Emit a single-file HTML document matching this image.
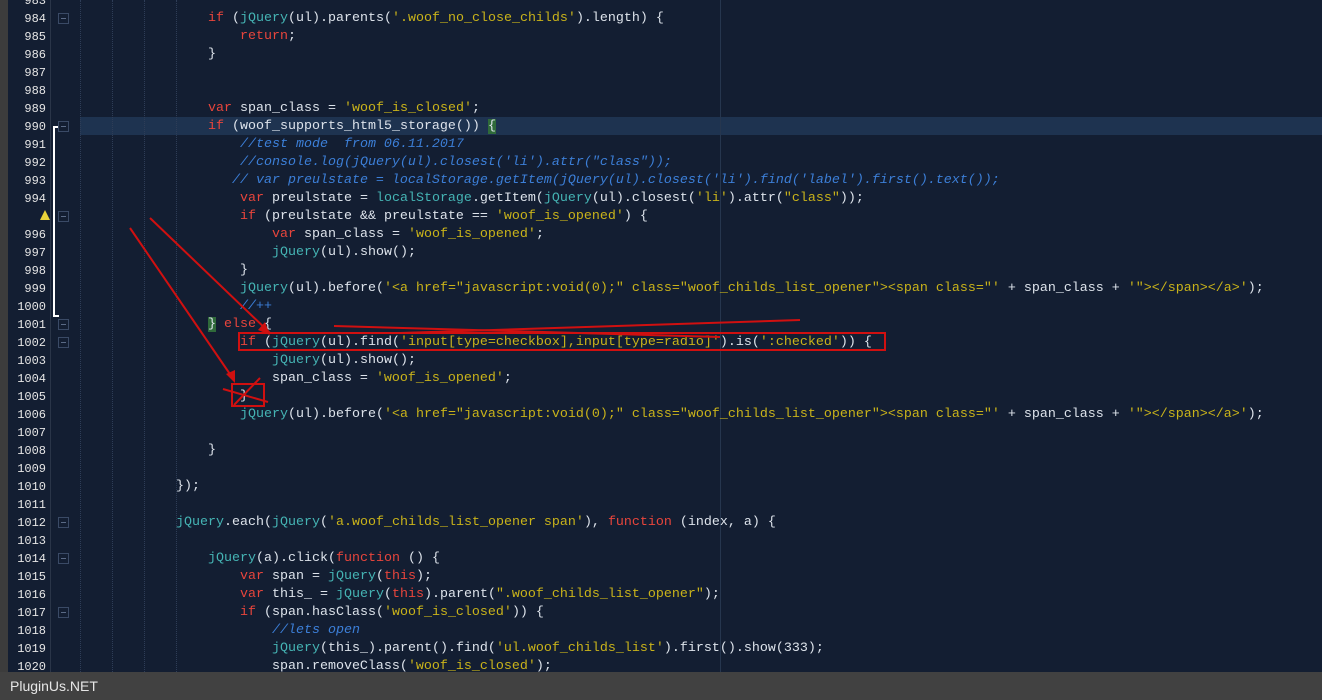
<!DOCTYPE html>
<html><head><meta charset="utf-8"><style>
body{margin:0;width:1322px;height:700px;overflow:hidden;background:#131e32;font-family:"Liberation Mono",monospace;position:relative}
.g{position:absolute;left:0;top:0;width:8px;height:672px;background:#3c3c3c}
.sep{position:absolute;left:50px;top:0;width:1px;height:672px;background:#2a3548}
.ln{position:absolute;left:8px;width:38px;text-align:right;color:#e6e6e6;font-size:12px;line-height:18px;height:18px;padding-top:1px}
.c{position:absolute;left:80px;white-space:pre;color:#dde3eb;font-size:13.33px;line-height:18px;height:18px;padding-top:1px}
.k{color:#e8453c}.s{color:#c9b31a}.j{color:#45b4b4}.m{color:#3c7fd8;font-style:italic}
.gd{position:absolute;top:0;height:672px;border-left:1px dotted #2e3d57}
.fb{position:absolute;left:58px;width:9px;height:9px;border:1px solid #3a4a66}
.fb:after{content:"";position:absolute;left:2px;top:4px;width:5px;height:1px;background:#5a6a86}
.bar{position:absolute;left:0;top:672px;width:1322px;height:28px;background:#414141;color:#e6e6e6;font-family:"Liberation Sans",sans-serif;font-size:14px;line-height:28px;padding-left:10px;box-sizing:border-box}
</style></head><body>
<div class="g"></div><div class="sep"></div>
<div style="position:absolute;left:80px;top:117px;width:1242px;height:18px;background:#1e3350"></div>
<div class="gd" style="left:80px"></div><div class="gd" style="left:112px"></div><div class="gd" style="left:144px"></div><div class="gd" style="left:176px"></div>
<div style="position:absolute;left:720px;top:0;width:1px;height:672px;background:#26364e"></div>
<div style="position:absolute;left:53px;top:126px;width:2px;height:190px;background:#fff"></div>
<div style="position:absolute;left:53px;top:126px;width:6px;height:2px;background:#fff"></div>
<div style="position:absolute;left:53px;top:315px;width:6px;height:2px;background:#fff"></div>
<div class="fb" style="top:13px"></div><div class="fb" style="top:121px"></div><div class="fb" style="top:211px"></div><div class="fb" style="top:319px"></div><div class="fb" style="top:337px"></div><div class="fb" style="top:517px"></div><div class="fb" style="top:553px"></div><div class="fb" style="top:607px"></div>
<div style="position:absolute;left:40px;top:210px;width:0;height:0;border-left:5px solid transparent;border-right:5px solid transparent;border-bottom:10px solid #e8d23a"></div>

<div id="L"></div>
<script>
var lines=[
[983,''],
[984,'                <span class="k">if</span> (<span class="j">jQuery</span>(ul).parents(<span class="s">\'.woof_no_close_childs\'</span>).length) {'],
[985,'                    <span class="k">return</span>;'],
[986,'                }'],
[987,''],[988,''],
[989,'                <span class="k">var</span> span_class = <span class="s">\'woof_is_closed\'</span>;'],
[990,'                <span class="k">if</span> (woof_supports_html5_storage()) <span style="background:#2f6a3a">{</span>'],
[991,'                    <span class="m">//test mode  from 06.11.2017</span>'],
[992,'                    <span class="m">//console.log(jQuery(ul).closest(\'li\').attr("class"));</span>'],
[993,'                   <span class="m">// var preulstate = localStorage.getItem(jQuery(ul).closest(\'li\').find(\'label\').first().text());</span>'],
[994,'                    <span class="k">var</span> preulstate = <span class="j">localStorage</span>.getItem(<span class="j">jQuery</span>(ul).closest(<span class="s">\'li\'</span>).attr(<span class="s">"class"</span>));'],
[995,'                    <span class="k">if</span> (preulstate &amp;&amp; preulstate == <span class="s">\'woof_is_opened\'</span>) {'],
[996,'                        <span class="k">var</span> span_class = <span class="s">\'woof_is_opened\'</span>;'],
[997,'                        <span class="j">jQuery</span>(ul).show();'],
[998,'                    }'],
[999,'                    <span class="j">jQuery</span>(ul).before(<span class="s">\'&lt;a href="javascript:void(0);" class="woof_childs_list_opener"&gt;&lt;span class="\'</span> + span_class + <span class="s">\'"&gt;&lt;/span&gt;&lt;/a&gt;\'</span>);'],
[1000,'                    <span class="m">//++</span>'],
[1001,'                <span style="background:#2f6a3a">}</span> <span class="k">else</span> {'],
[1002,'                    <span class="k">if</span> (<span class="j">jQuery</span>(ul).find(<span class="s">\'input[type=checkbox],input[type=radio]\'</span>).is(<span class="s">\':checked\'</span>)) {'],
[1003,'                        <span class="j">jQuery</span>(ul).show();'],
[1004,'                        span_class = <span class="s">\'woof_is_opened\'</span>;'],
[1005,'                    }'],
[1006,'                    <span class="j">jQuery</span>(ul).before(<span class="s">\'&lt;a href="javascript:void(0);" class="woof_childs_list_opener"&gt;&lt;span class="\'</span> + span_class + <span class="s">\'"&gt;&lt;/span&gt;&lt;/a&gt;\'</span>);'],
[1007,''],
[1008,'                }'],
[1009,''],
[1010,'            });'],
[1011,''],
[1012,'            <span class="j">jQuery</span>.each(<span class="j">jQuery</span>(<span class="s">\'a.woof_childs_list_opener span\'</span>), <span class="k">function</span> (index, a) {'],
[1013,''],
[1014,'                <span class="j">jQuery</span>(a).click(<span class="k">function</span> () {'],
[1015,'                    <span class="k">var</span> span = <span class="j">jQuery</span>(<span class="k">this</span>);'],
[1016,'                    <span class="k">var</span> this_ = <span class="j">jQuery</span>(<span class="k">this</span>).parent(<span class="s">".woof_childs_list_opener"</span>);'],
[1017,'                    <span class="k">if</span> (span.hasClass(<span class="s">\'woof_is_closed\'</span>)) {'],
[1018,'                        <span class="m">//lets open</span>'],
[1019,'                        <span class="j">jQuery</span>(this_).parent().find(<span class="s">\'ul.woof_childs_list\'</span>).first().show(333);'],
[1020,'                        span.removeClass(<span class="s">\'woof_is_closed\'</span>);']
];
var h='';
lines.forEach(function(l){var t=-9+(l[0]-983)*18;
if(l[0]!=995)h+='<div class="ln" style="top:'+t+'px">'+l[0]+'</div>';
h+='<div class="c" style="top:'+t+'px">'+l[1]+'</div>';});
document.getElementById('L').innerHTML=h;
</script>
<svg width="1322" height="700" style="position:absolute;left:0;top:0" xmlns="http://www.w3.org/2000/svg">
<g stroke="#d01010" stroke-width="2" fill="none">
<line x1="150" y1="218" x2="270" y2="333"/>
<line x1="130" y1="228" x2="234" y2="380"/>
<line x1="334" y1="326" x2="720" y2="337"/>
<line x1="400" y1="333" x2="800" y2="320"/>
<rect x="239" y="333" width="646" height="17"/>
<rect x="232" y="384" width="32" height="22"/>
<line x1="223" y1="389" x2="268" y2="402"/>
<line x1="234" y1="405" x2="260" y2="378"/>
</g>
<polygon points="270,335 258,330 265,322" fill="#d01010"/>
<polygon points="235,383 226,374 235,370" fill="#d01010"/>
</svg>
<div class="bar">PluginUs.NET</div>
</body></html>
